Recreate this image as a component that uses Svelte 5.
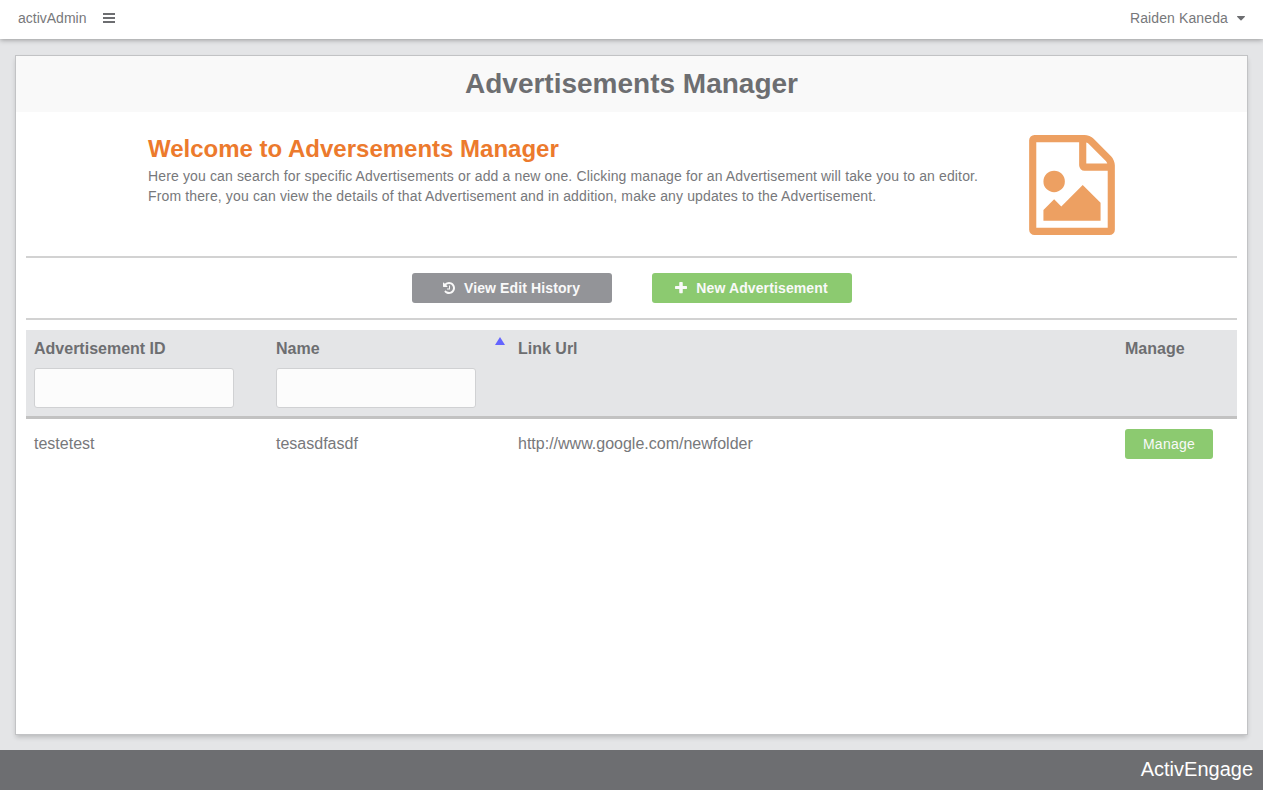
<script>
  const rows = [{ id: 'testetest', name: 'tesasdfasdf', url: 'http://www.google.com/newfolder' }];
  let idFilter = $state('');
  let nameFilter = $state('');
</script>

<div class="page">
  <header>
    <div class="brand">
      <span>activAdmin</span>
      <svg class="bars" width="12" height="10" viewBox="0 0 12 10" aria-hidden="true">
        <path d="M0 0h12v2H0zM0 4h12v2H0zM0 8h12v2H0z" />
      </svg>
    </div>
    <div class="user">
      <span>Raiden Kaneda</span>
      <svg width="8" height="5" viewBox="0 0 8 5" aria-hidden="true"><path d="M0.4 0h7.2q.7.4.1 1L4.5 4.2q-.5.5-1 0L.3 1q-.6-.6.1-1z" /></svg>
    </div>
  </header>

  <main>
    <h1>Advertisements Manager</h1>
    <section class="intro">
      <div class="welcome">
        <h2>Welcome to Adversements Manager</h2>
        <p>Here you can search for specific Advertisements or add a new one. Clicking manage for an Advertisement will take you to an editor.<br />From there, you can view the details of that Advertisement and in addition, make any updates to the Advertisement.</p>
      </div>
      <svg class="file" width="86" height="100" viewBox="0 0 1536 1792" aria-hidden="true">
        <path d="M1468 380q28 28 48 76t20 88v1152q0 40-28 68t-68 28H96q-40 0-68-28t-28-68V96q0-40 28-68T96 0h896q40 0 88 20t76 48zm-444-244v376h376q-10-29-22-41L1065 158q-12-12-41-22zm384 1528V640H992q-40 0-68-28t-28-68V128H128v1536h1280zm-128-448v320H256v-192l192-192 128 128 384-384zm-832-192q-80 0-136-56t-56-136 56-136 136-56 136 56 56 136-56 136-136 56z" />
      </svg>
    </section>

    <div class="actions">
      <button class="history">
        <svg width="12" height="14" viewBox="0 0 1536 1792" aria-hidden="true"><path d="M1536 896q0 156-61 298t-164 245-245 164-298 61q-172 0-327-72.5T177 1387q-7-10-6.5-22.5t8.5-20.5l137-138q10-9 25-9 16 2 23 12 73 95 179 147t225 52q104 0 198.500-40.500T1130 1258t109.500-163.500T1280 896t-40.500-198.500T1130 534 966.500 424.500 768 384q-98 0-188 35.500T420 521l137 138q31 30 14 69-17 40-59 40H64q-26 0-45-19T0 704V256q0-42 40-59 39-17 69 14l130 129q107-101 244.500-156.500T768 128q156 0 298 61t245 164 164 245 61 298zM896 608v448q0 14-9 23t-23 9H544q-14 0-23-9t-9-23v-64q0-14 9-23t23-9h224V608q0-14 9-23t23-9h64q14 0 23 9t9 23z" /></svg>
        <span>View Edit History</span>
      </button>
      <button class="new">
        <svg width="12" height="14" viewBox="0 0 1536 1792" aria-hidden="true"><path d="M1536 736v192q0 40-28 68t-68 28h-448v448q0 40-28 68t-68 28H640q-40 0-68-28t-28-68v-448H96q-40 0-68-28T0 928V736q0-40 28-68t68-28h448V224q0-40 28-68t68-28h256q40 0 68 28t28 68v416h448q40 0 68 28t28 68z" /></svg>
        <span>New Advertisement</span>
      </button>
    </div>

    <div class="row head">
      <div><strong>Advertisement ID</strong><input aria-label="Advertisement ID" bind:value={idFilter} /></div>
      <div>
        <strong class="sorted">Name<svg width="10" height="8" viewBox="0 0 10 8" aria-hidden="true"><path d="M5 0l5 8H0z" /></svg></strong>
        <input aria-label="Name" bind:value={nameFilter} />
      </div>
      <div><strong>Link Url</strong></div>
      <div><strong>Manage</strong></div>
    </div>
    {#each rows as row}
      <div class="row">
        <div>{row.id}</div>
        <div>{row.name}</div>
        <div>{row.url}</div>
        <div><button class="manage">Manage</button></div>
      </div>
    {/each}
  </main>

  <footer>ActivEngage</footer>
</div>

<style>
  :global(body) { margin: 0; }
  .page {
    height: 790px;
    display: flex;
    flex-direction: column;
    background: #e4e5e7;
    color: #77787b;
    font: 14px/20px "Liberation Sans", Arial, sans-serif;
    box-sizing: border-box;
  }
  .page :is(header, main, footer, input, button, .row) { box-sizing: border-box; }
  svg { display: block; fill: currentColor; flex: none; }
  header {
    height: 39px;
    padding: 0 18px 3px;
    display: flex;
    align-items: center;
    justify-content: space-between;
    background: #fff;
    box-shadow: 0 1px 5px rgba(0, 0, 0, 0.34);
  }
  .brand { display: flex; align-items: center; gap: 17px; }
  .bars, .user svg { color: #6d6e71; }
  .user { display: flex; align-items: center; gap: 9px; letter-spacing: 0.12px; }
  main {
    flex: 1;
    margin: 16px 15px 15px;
    border: 1px solid #c2c3c5;
    background: #fff;
    box-shadow: 0 3px 5px -1px rgba(0, 0, 0, 0.2);
  }
  h1 {
    margin: 0;
    height: 56px;
    background: #f9f9f9;
    color: #6d6e71;
    font-size: 28px;
    line-height: 56px;
    text-align: center;
  }
  .intro {
    height: 144px;
    margin: 0 10px;
    padding: 23px 122px 0;
    box-sizing: border-box;
    display: flex;
    justify-content: space-between;
  }
  h2 { margin: 0; color: #ec7a2d; font-size: 24px; line-height: 28px; }
  .welcome p { margin: 3px 0 0; white-space: nowrap; letter-spacing: 0.136px; }
  .file { color: #eda062; }
  .actions {
    height: 64px;
    margin: 0 10px 10px;
    box-sizing: border-box;
    border: solid #d2d2d2;
    border-width: 2px 0;
    display: flex;
    align-items: center;
    justify-content: center;
    gap: 40px;
  }
  button {
    height: 30px;
    border: 0;
    border-radius: 3px;
    padding: 0;
    color: #f9f9f9;
    background: #8cca70;
    font: 14px/20px "Liberation Sans", Arial, sans-serif;
  }
  .actions button {
    width: 200px;
    display: flex;
    align-items: center;
    justify-content: center;
    gap: 9px;
    font-weight: bold;
    letter-spacing: 0.12px;
  }
  .actions .history { background: #939498; }
  .row {
    margin: 0 10px;
    padding: 10px 8px;
    display: grid;
    grid-template-columns: 242px 242px 607px 1fr;
    font-size: 16px;
    line-height: 30px;
  }
  .head {
    height: 89px;
    padding-top: 8px;
    background: #e4e5e7;
    border-bottom: 3px solid #c2c2c2;
    color: #6d6e71;
    line-height: 22px;
  }
  strong { display: block; }
  .sorted { display: flex; justify-content: space-between; padding-right: 13px; }
  .sorted svg { color: #6464ff; margin-top: -1px; }
  input {
    display: block;
    width: 200px;
    height: 40px;
    margin-top: 8px;
    border: 1px solid #d0d1d3;
    border-radius: 3px;
    background: #fcfcfc;
  }
  .manage { display: block; width: 88px; letter-spacing: 0.25px; }
  footer {
    height: 40px;
    padding: 0 10px;
    background: #6d6e71;
    color: #fff;
    font-size: 20px;
    line-height: 38px;
    text-align: right;
  }
</style>
